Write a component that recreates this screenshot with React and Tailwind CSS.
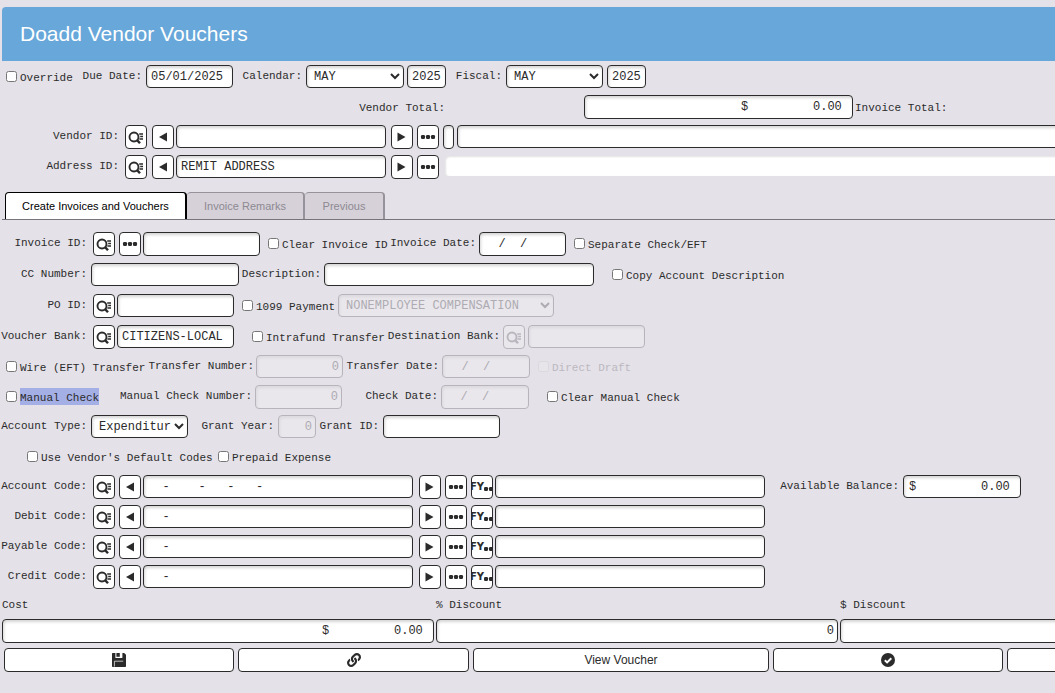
import React from "react";
import { FaLink } from "react-icons/fa";

const controlBase =
  "block shrink-0 rounded border font-['Liberation_Mono',monospace] text-[12px] shadow-[inset_1px_2px_3px_rgba(0,0,0,0.17)] disabled:border-[#b7b4bb] disabled:bg-[#e9e7ec] disabled:text-[#aeabb2] disabled:opacity-100 disabled:shadow-[inset_1px_2px_3px_rgba(0,0,0,0.06)]";

function Field({ label, value = "", className = "", right = false, tall = false, ...rest }) {
  return (
    <input
      type="text"
      aria-label={label}
      defaultValue={value}
      className={`${controlBase} ${tall ? "h-6" : "h-[23px]"} border-[#2b2b2b] bg-white text-[#2b2b2b] ${right ? "pr-[3px] text-right" : "pl-1"} ${className}`}
      {...rest}
    />
  );
}

function Select({ id, children, className = "", ...rest }) {
  return (
    <select
      id={id}
      className={`${controlBase} h-[23px] border-[#2b2b2b] bg-white pl-[3px] text-[#2b2b2b] ${className}`}
      {...rest}
    >
      <option>{children}</option>
    </select>
  );
}

function Label({ htmlFor, children, className = "" }) {
  return (
    <label
      htmlFor={htmlFor}
      className={`flex h-[22px] shrink-0 items-center justify-end whitespace-nowrap ${className}`}
    >
      {children}
    </label>
  );
}

function Check({ children, className = "", selected = false, disabled = false }) {
  return (
    <label className={`flex h-6 shrink-0 items-start gap-[3px] whitespace-nowrap ${disabled ? "text-[#bbb8bf]" : ""} ${className}`}>
      <input type="checkbox" disabled={disabled} className={`mt-[6px] size-[11px] shrink-0 ${disabled ? "opacity-30" : ""}`} />
      <span className={`mt-[3px] h-[17px] leading-[21px] ${selected ? "bg-[#a4afe6]" : ""}`}>{children}</span>
    </label>
  );
}

function IconButton({ label, children, className = "", disabled = false }) {
  return (
    <button
      type="button"
      aria-label={label}
      disabled={disabled}
      className={`flex h-6 w-[22px] shrink-0 items-center justify-center overflow-hidden rounded border border-[#2b2b2b] bg-white pb-px text-[#2b2b2b] disabled:border-[#b7b4bb] disabled:bg-[#e9e7ec] disabled:text-[#b9b6bd] ${className}`}
    >
      {children}
    </button>
  );
}

function SearchIcon() {
  return (
    <svg width="16" height="14" viewBox="0 0 16 14" fill="none" stroke="currentColor" className="shrink-0">
      <circle cx="6" cy="7" r="4.5" strokeWidth="1.9" />
      <path d="M8.6 9.6l3.4 3.6" strokeWidth="2.4" />
      <path d="M11.2 4h3.8M12.2 6.5h2.8M11.4 9h3.6" strokeWidth="1.3" />
    </svg>
  );
}

function DotsIcon() {
  return (
    <svg width="16" height="6" viewBox="0 0 16 6" fill="currentColor" className="shrink-0">
      <rect x="1" y="1" width="4" height="4" rx="1.2" />
      <rect x="6" y="1" width="4" height="4" rx="1.2" />
      <rect x="11" y="1" width="4" height="4" rx="1.2" />
    </svg>
  );
}

function LeftIcon() {
  return (
    <svg width="10" height="10" viewBox="0 0 10 10" fill="currentColor" className="shrink-0">
      <path d="M9 .5v9L1 5z" />
    </svg>
  );
}

function RightIcon() {
  return (
    <svg width="10" height="10" viewBox="0 0 10 10" fill="currentColor" className="shrink-0">
      <path d="M.5 .5v9L8.5 5z" />
    </svg>
  );
}

function FiscalIcon() {
  return (
    <span className="flex shrink-0 items-center font-['DejaVu_Sans',sans-serif] text-[10px] leading-none font-bold">
      FY
      <svg width="10" height="10" viewBox="0 0 10 10" fill="currentColor">
        <rect x="0" y="5" width="4" height="4" rx="1.2" />
        <rect x="5" y="5" width="4" height="4" rx="1.2" />
      </svg>
    </span>
  );
}

function SaveIcon() {
  return (
    <svg width="14" height="14" viewBox="0 0 14 14">
      <path d="M1 0h11.2L14 1.8V13c0 .6-.4 1-1 1H1c-.6 0-1-.4-1-1V1c0-.6.4-1 1-1z" fill="currentColor" />
      <path d="M3.4 0h7v4.4c0 .4-.2.6-.6.6H4c-.4 0-.6-.2-.6-.6z" fill="white" />
      <path d="M4.4 0h3.4v3.8H4.4z" fill="currentColor" />
      <path d="M2.4 13.6V8.2h8.8" fill="none" stroke="white" strokeWidth=".7" />
    </svg>
  );
}

function ApproveIcon() {
  return (
    <svg width="14" height="14" viewBox="0 0 14 14">
      <circle cx="7" cy="7" r="7" fill="currentColor" />
      <path d="M3.8 7.2l2.3 2.2 4.2-4.2" fill="none" stroke="white" strokeWidth="2" />
    </svg>
  );
}

function Row({ children }) {
  return <div className="flex h-6 items-start">{children}</div>;
}

function LookupRow({ id, label, value, children }) {
  return (
    <Row>
      <Label htmlFor={id} className="w-[117px]">{label}</Label>
      <IconButton label={`Search ${label}`} className="ml-[6px]"><SearchIcon /></IconButton>
      <IconButton label="Previous record" className="ml-[5px]"><LeftIcon /></IconButton>
      <Field id={id} value={value} className="ml-[2px] w-[210px]" />
      <IconButton label="Next record" className="ml-[5px]"><RightIcon /></IconButton>
      <IconButton label="More" className="ml-1"><DotsIcon /></IconButton>
      {children}
    </Row>
  );
}

function CodeRow({ id, label, value, children }) {
  return (
    <Row>
      <Label htmlFor={id} className="w-[85px]">{label}</Label>
      <IconButton label={`Search ${label}`} className="ml-[6px]"><SearchIcon /></IconButton>
      <IconButton label="Previous code" className="ml-1"><LeftIcon /></IconButton>
      <Field id={id} value={value} className="ml-[2px] w-[270px]" />
      <IconButton label="Next code" className="ml-[6px]"><RightIcon /></IconButton>
      <IconButton label="More" className="ml-1"><DotsIcon /></IconButton>
      <IconButton label="Fiscal year" className="ml-1"><FiscalIcon /></IconButton>
      <Field label={`${label} description`} className="ml-[2px] w-[270px]" />
      {children}
    </Row>
  );
}

function Tab({ active = false, children, className = "" }) {
  return (
    <button
      type="button"
      role="tab"
      aria-selected={active}
      className={`h-[27px] shrink-0 rounded-t text-center ${
        active
          ? "border-x border-t border-r-2 border-black bg-white text-black"
          : "border-t border-r-2 border-[#96929b] bg-[#d6d1d9] text-[#8d8992]"
      } ${className}`}
    >
      {children}
    </button>
  );
}

function ActionButton({ label, children, className = "" }) {
  return (
    <button
      type="button"
      aria-label={label}
      className={`flex h-6 shrink-0 items-center justify-center rounded border border-[#2b2b2b] bg-white font-['Liberation_Sans',sans-serif] text-[12px] text-[#2b2b2b] ${className}`}
    >
      {children}
    </button>
  );
}

const MONEY = "$         0.00 ";
const BLANK_DATE = "  /  /";

export default function App() {
  return (
    <div className="min-h-screen overflow-hidden bg-[#e4e1e8] pt-[7px] pb-5 pl-[2px] font-['Liberation_Mono',monospace] text-[11px] text-[#2b2b2b]">
      <form className="min-w-[1300px]">
        <header className="flex h-[54px] items-center rounded-tl-sm bg-[#67a7d9] px-[18px]">
          <h1 className="font-['Liberation_Sans',sans-serif] text-[21px] text-white">Doadd Vendor Vouchers</h1>
        </header>

        <div className="mt-1 flex flex-col gap-[6px]">
          <Row>
            <Check className="ml-1 w-[67px]">Override</Check>
            <Label htmlFor="due" className="w-[69px]">Due Date:</Label>
            <Field id="due" value="05/01/2025" className="ml-1 w-[87px]" />
            <Label htmlFor="calendar" className="w-[69px]">Calendar:</Label>
            <Select id="calendar" className="ml-1 w-[98px]">MAY</Select>
            <Field label="Calendar year" value="2025" className="ml-[3px] w-[39px]" />
            <Label htmlFor="fiscal" className="w-[56px]">Fiscal:</Label>
            <Select id="fiscal" className="ml-1 w-[97px]">MAY</Select>
            <Field label="Fiscal year" value="2025" className="ml-1 w-[39px]" />
          </Row>
          <Row>
            <Label htmlFor="vendor-total" className="w-[443px] pt-1">Vendor Total:</Label>
            <Field id="vendor-total" value={MONEY} right tall className="ml-[139px] w-[269px]" />
            <Label className="ml-[2px] pt-1">Invoice Total:</Label>
          </Row>
          <LookupRow id="vendor-id" label="Vendor ID:">
            <Field label="Vendor flag" tall className="ml-1 w-[11px]" />
            <Field label="Vendor name" className="ml-[3px] w-[700px]" />
          </LookupRow>
          <LookupRow id="address-id" label="Address ID:" value="REMIT ADDRESS">
            <input
              type="text"
              aria-label="Address"
              readOnly
              className="mt-px ml-[6px] h-5 w-[700px] rounded-sm bg-white px-1 shadow-[inset_1px_1px_2px_rgba(0,0,0,0.12)]"
            />
          </LookupRow>
        </div>

        <div role="tablist" className="mt-[13px] flex border-b border-[#77747b] pl-[3px] font-['Liberation_Sans',sans-serif]">
          <Tab active className="w-[182px]">Create Invoices and Vouchers</Tab>
          <Tab className="w-[118px]">Invoice Remarks</Tab>
          <Tab className="w-[80px]">Previous</Tab>
        </div>

        <div className="mt-3 flex flex-col gap-[7px]">
          <Row>
            <Label htmlFor="invoice-id" className="w-[85px]">Invoice ID:</Label>
            <IconButton label="Search invoice" className="ml-[6px]"><SearchIcon /></IconButton>
            <IconButton label="More" className="ml-1"><DotsIcon /></IconButton>
            <Field id="invoice-id" tall className="ml-[2px] w-[117px]" />
            <Check className="ml-2 w-[120px]">Clear Invoice ID</Check>
            <Label htmlFor="invoice-date" className="w-[88px]">Invoice Date:</Label>
            <Field id="invoice-date" value={BLANK_DATE} tall className="ml-[3px] w-[87px]" />
            <Check className="ml-2">Separate Check/EFT</Check>
          </Row>
          <Row>
            <Label htmlFor="cc" className="w-[85px]">CC Number:</Label>
            <Field id="cc" className="ml-1 w-[148px]" />
            <Label htmlFor="description" className="w-[82px]">Description:</Label>
            <Field id="description" className="ml-[3px] w-[270px]" />
            <Check className="ml-[18px]">Copy Account Description</Check>
          </Row>
          <Row>
            <Label htmlFor="po" className="w-[85px]">PO ID:</Label>
            <IconButton label="Search PO" className="ml-[6px]"><SearchIcon /></IconButton>
            <Field id="po" className="ml-[2px] w-[117px]" />
            <Check className="ml-2 w-[96px]">1099 Payment</Check>
            <Select id="payment-type" aria-label="1099 payment type" disabled className="w-[216px]">NONEMPLOYEE COMPENSATION</Select>
          </Row>
          <Row>
            <Label htmlFor="bank" className="w-[85px]">Voucher Bank:</Label>
            <IconButton label="Search bank" className="ml-[6px]"><SearchIcon /></IconButton>
            <Field id="bank" value="CITIZENS-LOCAL" className="ml-[2px] w-[117px]" />
            <Check className="ml-[18px] w-[132px]">Intrafund Transfer</Check>
            <Label htmlFor="destination" className="w-[116px]">Destination Bank:</Label>
            <IconButton label="Search destination bank" disabled className="ml-[3px]"><SearchIcon /></IconButton>
            <Field id="destination" disabled className="ml-[3px] w-[117px]" />
          </Row>
        </div>

        <div className="mt-[6px] flex flex-col gap-[6px]">
          <Row>
            <Check className="ml-1 w-[139px]">Wire (EFT) Transfer</Check>
            <Label htmlFor="transfer-number" className="w-[109px]">Transfer Number:</Label>
            <Field id="transfer-number" value="0" right disabled className="ml-[2px] w-[87px]" />
            <Label htmlFor="transfer-date" className="w-[96px]">Transfer Date:</Label>
            <Field id="transfer-date" value={BLANK_DATE} disabled className="ml-[3px] w-[88px]" />
            <Check disabled className="ml-2">Direct Draft</Check>
          </Row>
          <Row>
            <Check selected className="ml-1 w-[115px]">Manual Check</Check>
            <Label htmlFor="check-number" className="w-[131px]">Manual Check Number:</Label>
            <Field id="check-number" value="0" right tall disabled className="ml-[3px] w-[87px]" />
            <Label htmlFor="check-date" className="w-[96px]">Check Date:</Label>
            <Field id="check-date" value={BLANK_DATE} tall disabled className="ml-[3px] w-[88px]" />
            <Check className="ml-[18px]">Clear Manual Check</Check>
          </Row>
          <Row>
            <Label htmlFor="account-type" className="w-[85px]">Account Type:</Label>
            <Select id="account-type" className="ml-1 w-[97px]">Expenditure</Select>
            <Label htmlFor="grant-year" className="w-[86px]">Grant Year:</Label>
            <Field id="grant-year" value="0" right disabled className="ml-1 w-[38px]" />
            <Label htmlFor="grant-id" className="w-[63px]">Grant ID:</Label>
            <Field id="grant-id" className="ml-1 w-[117px]" />
          </Row>
          <Row>
            <Check className="ml-[25px] w-[191px]">Use Vendor's Default Codes</Check>
            <Check>Prepaid Expense</Check>
          </Row>
          <CodeRow id="account-code" label="Account Code:" value="  -    -   -   -">
            <Label htmlFor="balance" className="w-[134px]">Available Balance:</Label>
            <Field id="balance" value={MONEY} right className="ml-1 w-[118px]" />
          </CodeRow>
          <CodeRow id="debit-code" label="Debit Code:" value="  -" />
          <CodeRow id="payable-code" label="Payable Code:" value="  -" />
          <CodeRow id="credit-code" label="Credit Code:" value="  -" />
        </div>

        <div className="mt-2 grid grid-cols-[432px_402px_1fr] gap-x-[2px] gap-y-[6px]">
          <label htmlFor="cost" className="h-4 leading-4">Cost</label>
          <label htmlFor="percent" className="h-4 leading-4">% Discount</label>
          <label htmlFor="amount" className="h-4 leading-4">$ Discount</label>
          <Field id="cost" value={MONEY} right tall className="w-full" />
          <Field id="percent" value="0" right tall className="w-full" />
          <Field id="amount" value={MONEY} right tall className="w-full" />
        </div>

        <div className="mt-[5px] flex gap-1 pl-[2px]">
          <ActionButton label="Save" className="w-[230px]"><SaveIcon /></ActionButton>
          <ActionButton label="Attachments" className="w-[231px]"><FaLink size={14} /></ActionButton>
          <ActionButton label="View Voucher" className="w-[296px]">View Voucher</ActionButton>
          <ActionButton label="Approve" className="w-[230px]"><ApproveIcon /></ActionButton>
          <ActionButton label="More actions" className="w-[230px]" />
        </div>
      </form>
    </div>
  );
}
